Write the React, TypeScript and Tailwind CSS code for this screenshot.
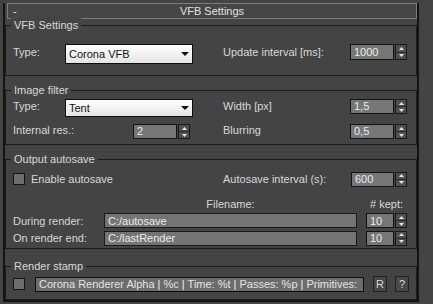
import type { ReactNode } from "react";

const UpDown = ({ h }: { h: string }) => (
  <div className={`w-[12px] ${h} flex flex-col border border-[#181818] bg-[#505050]`}>
    <div className="flex flex-1 items-center justify-center border-b border-[#2a2a2a]">
      <svg width="5" height="3" viewBox="0 0 5 3">
        <path d="M0 3h5L2.5 0z" fill="#e6e6e6" />
      </svg>
    </div>
    <div className="flex flex-1 items-center justify-center">
      <svg width="5" height="3" viewBox="0 0 5 3">
        <path d="M0 0h5L2.5 3z" fill="#e6e6e6" />
      </svg>
    </div>
  </div>
);

const Spinner = ({ value, w, h }: { value: string; w: string; h: string }) => (
  <div className="flex gap-[1px]">
    <div className={`${w} ${h} flex items-center border border-[#141414] bg-[#767676] pl-[3px] text-[#ececec]`}>
      {value}
    </div>
    <UpDown h={h} />
  </div>
);

const Dropdown = ({ value, h }: { value: string; h: string }) => (
  <div
    className={`w-[128px] ${h} flex items-center justify-between border border-[#0e0e0e] bg-gradient-to-b from-[#ffffff] to-[#e4e4e4] pl-[3px] pr-[3px] text-[#111]`}
  >
    <span>{value}</span>
    <svg width="8" height="4" viewBox="0 0 8 4">
      <path d="M0 0h8L4 4z" fill="#111" />
    </svg>
  </div>
);

const Check = () => <div className="h-[12px] w-[12px] border border-[#141414] bg-[#6e6e6e]" />;

const Field = ({ value, w }: { value: string; w: string }) => (
  <div className={`${w} flex h-[15px] items-center border border-[#1a1a1a] bg-[#747474] pl-[3px] text-[#ececec]`}>
    {value}
  </div>
);

const Group = ({ title, box, children }: { title: string; box: string; children: ReactNode }) => (
  <div className={`${box} w-[412px] border border-[#1c1c1c]`}>
    <div className="-mt-[8px] ml-[5px] w-fit bg-[#444] px-[3px] leading-[14px] text-[#d8d8d8]">{title}</div>
    {children}
  </div>
);

export default function App() {
  return (
    <div className="h-[304px] w-[433px] overflow-hidden bg-[#444] pl-[3px] pt-[12px] font-['Liberation_Sans',Arial,sans-serif] text-[11px] text-[#d8d8d8]">
      <div className="w-[416px] border-x-2 border-b-2 border-[#141414]">
        {/* rollout title */}
        <div className="-mt-[9px] ml-[2px] flex h-[16px] w-[410px] items-center border border-[#7c7c7c] bg-[#464646] text-[#e2e2e2]">
          <span className="w-[20px] pl-[5px]">-</span>
          <span className="flex-1 text-center">VFB Settings</span>
          <span className="w-[20px]" />
        </div>

        <Group title="VFB Settings" box="mt-[6px] h-[51px]">
          <div className="mt-[12px] flex items-start pl-[7px]">
            <span className="w-[52px] leading-[16px]">Type:</span>
            <Dropdown value="Corona VFB" h="h-[20px]" />
            <span className="ml-[30px] w-[127px] leading-[16px]">Update interval [ms]:</span>
            <Spinner value="1000" w="w-[44px]" h="h-[16px]" />
          </div>
        </Group>

        <Group title="Image filter" box="mt-[14px] h-[55px]">
          <div className="mt-[2px] flex items-start pl-[7px]">
            <span className="w-[52px] leading-[14px]">Type:</span>
            <Dropdown value="Tent" h="h-[18px]" />
            <span className="ml-[30px] w-[127px] leading-[15px]">Width [px]</span>
            <Spinner value="1,5" w="w-[44px]" h="h-[15px]" />
          </div>
          <div className="mt-[7px] flex items-start pl-[7px]">
            <span className="w-[120px] leading-[13px]">Internal res.:</span>
            <Spinner value="2" w="w-[44px]" h="h-[15px]" />
            <span className="ml-[33px] w-[127px] leading-[13px]">Blurring</span>
            <Spinner value="0,5" w="w-[44px]" h="h-[15px]" />
          </div>
        </Group>

        <Group title="Output autosave" box="mt-[14px] h-[90px]">
          <div className="mt-[5px] flex items-center pl-[7px]">
            <div className="flex w-[210px] items-center gap-[6px]">
              <Check />
              <span>Enable autosave</span>
            </div>
            <span className="w-[128px]">Autosave interval (s):</span>
            <Spinner value="600" w="w-[43px]" h="h-[15px]" />
          </div>
          <div className="mt-[9px] flex pl-[7px] leading-[14px]">
            <span className="w-[91px]" />
            <span className="w-[253px] text-center">Filename:</span>
            <span className="ml-[9px] w-[41px] text-center"># kept:</span>
          </div>
          <div className="mt-[2px] flex items-center pl-[7px]">
            <span className="w-[91px]">During render:</span>
            <Field value="C:/autosave" w="w-[253px]" />
            <div className="ml-[9px]">
              <Spinner value="10" w="w-[28px]" h="h-[15px]" />
            </div>
          </div>
          <div className="mt-[1px] flex items-center pl-[7px]">
            <span className="w-[91px]">On render end:</span>
            <Field value="C:/lastRender" w="w-[253px]" />
            <div className="ml-[9px]">
              <Spinner value="10" w="w-[28px]" h="h-[15px]" />
            </div>
          </div>
        </Group>

        <Group title="Render stamp" box="mt-[17px] h-[34px]">
          <div className="mt-[3px] flex items-center pl-[7px]">
            <Check />
            <div className="ml-[10px] flex h-[15px] w-[329px] items-center overflow-hidden whitespace-nowrap border border-[#0e0e0e] bg-[#6c6c6c] pl-[3px] text-[#e4e4e4]">
              Corona Renderer Alpha <span className="mx-[3px] text-[#f4f4f4]">|</span> %c{" "}
              <span className="mx-[3px] text-[#f4f4f4]">|</span> Time: %t{" "}
              <span className="mx-[3px] text-[#f4f4f4]">|</span> Passes: %p{" "}
              <span className="mx-[3px] text-[#f4f4f4]">|</span> Primitives:
            </div>
            <div className="ml-[9px] flex h-[16px] w-[14px] items-center justify-center border border-[#222] bg-[#484848]">R</div>
            <div className="ml-[8px] flex h-[16px] w-[14px] items-center justify-center border border-[#222] bg-[#484848]">?</div>
          </div>
        </Group>
      </div>
    </div>
  );
}
